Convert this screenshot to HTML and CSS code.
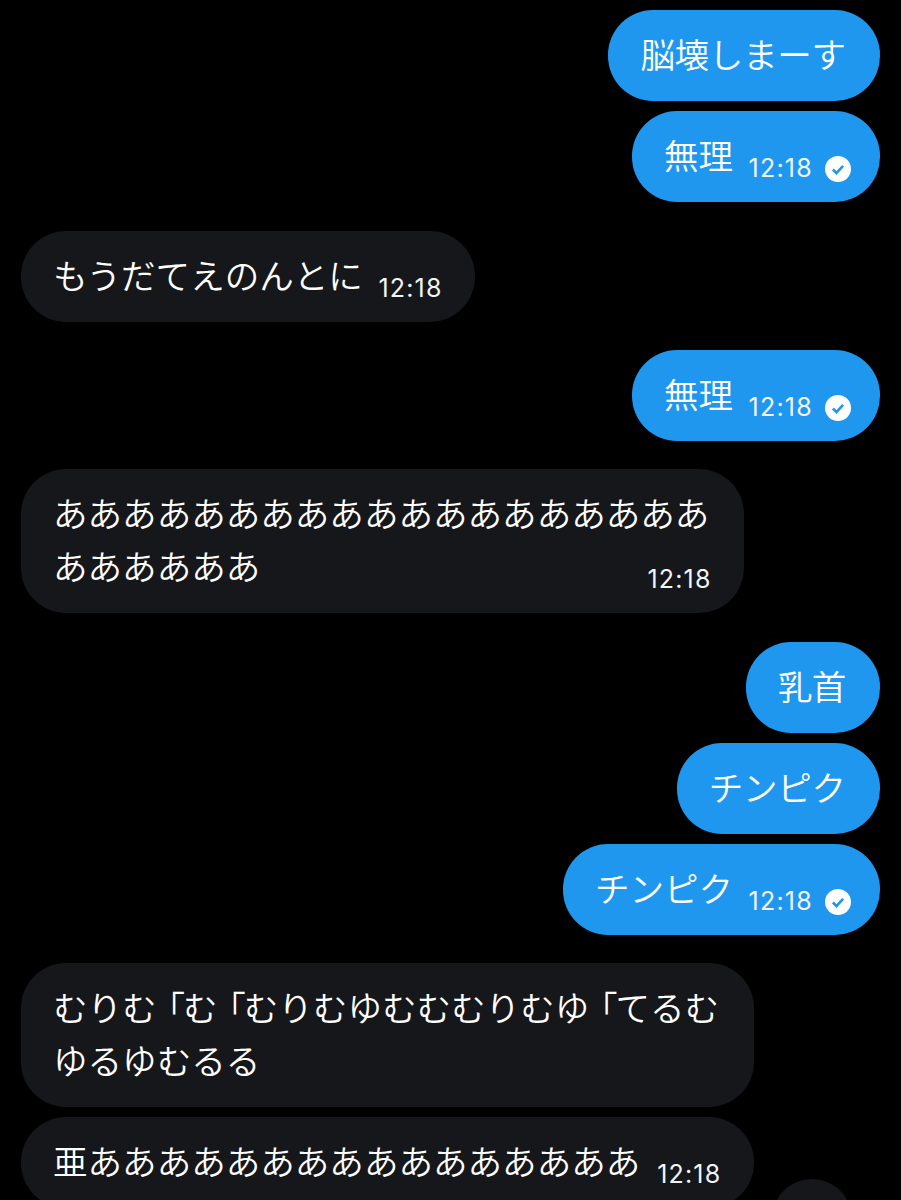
FILE: index.html
```html
<!DOCTYPE html>
<html lang="ja">

<head>
    <meta charset="UTF-8">
    <meta name="viewport" content="width=device-width, initial-scale=1.0">
    <title>Messages</title>
    <link rel="stylesheet" href="styles.css">
</head>

<body>
    <div class="chat">
        <div class="group sent">
            <div class="bubble tight">脳壊しまーす</div>
            <div class="bubble">
                <span>無理</span>
                <span class="meta">
                    <span class="time">12:18</span>
                    <svg class="tick" viewBox="0 0 25 25"><circle cx="12.5" cy="12.5" r="12.5" fill="#fff"/><path d="M7.6 13l3.4 3.4 6.4-7" fill="none" stroke="#2097ee" stroke-width="2.5"/></svg>
                </span>
            </div>
        </div>

        <div class="group received wide-gap">
            <div class="bubble">
                <span>もうだてえのんとに</span>
                <span class="meta"><span class="time">12:18</span></span>
            </div>
        </div>

        <div class="group sent">
            <div class="bubble">
                <span>無理</span>
                <span class="meta">
                    <span class="time">12:18</span>
                    <svg class="tick" viewBox="0 0 25 25"><circle cx="12.5" cy="12.5" r="12.5" fill="#fff"/><path d="M7.6 13l3.4 3.4 6.4-7" fill="none" stroke="#2097ee" stroke-width="2.5"/></svg>
                </span>
            </div>
        </div>

        <div class="group received">
            <div class="bubble multi">
                <div>あああああああああああああああああああ</div>
                <div class="last-line">
                    <span>ああああああ</span>
                    <span class="meta"><span class="time">12:18</span></span>
                </div>
            </div>
        </div>

        <div class="group sent wide-gap">
            <div class="bubble tighter">乳首</div>
            <div class="bubble tight">チンピク</div>
            <div class="bubble">
                <span>チンピク</span>
                <span class="meta">
                    <span class="time">12:18</span>
                    <svg class="tick" viewBox="0 0 25 25"><circle cx="12.5" cy="12.5" r="12.5" fill="#fff"/><path d="M7.6 13l3.4 3.4 6.4-7" fill="none" stroke="#2097ee" stroke-width="2.5"/></svg>
                </span>
            </div>
        </div>

        <div class="group received">
            <div class="bubble multi">
                <div>むりむ<span class="kakko">｢</span>む<span class="kakko">｢</span>むりむゆむむむりむゆ<span class="kakko">｢</span>てるむ</div>
                <div>ゆるゆむるる</div>
            </div>
            <div class="bubble">
                <span>亜ああああああああああああああああ</span>
                <span class="meta"><span class="time">12:18</span></span>
            </div>
        </div>
    </div>

    <div class="scroll-button"></div>
</body>

</html>
```

FILE: styles.css
```css
html,
body {
    height: 1200px;
}

body {
    margin: 0;
    background: #000;
    color: #fff;
    font-family: "Noto Sans CJK JP", "Noto Sans", sans-serif;
    font-size: 34.56px;
    font-weight: 350;
    line-height: 53px;
    overflow: hidden;
    position: relative;
}

.chat {
    display: flex;
    flex-direction: column;
    padding: 10px 21px 0;
}

.group {
    display: flex;
    flex-direction: column;
    gap: 10px;
    width: fit-content;
    margin-top: 28px;
}

.group:first-child {
    margin-top: 0;
}

.group.wide-gap {
    margin-top: 29px;
}

.sent {
    align-self: flex-end;
    align-items: flex-end;
}

.received {
    align-self: flex-start;
    align-items: stretch;
}

.bubble {
    display: flex;
    padding: 17px 34.4px 21px 32px;
    border-radius: 45px;
    white-space: nowrap;
}

.bubble.multi {
    display: block;
}

.bubble.tight {
    letter-spacing: -0.35px;
}

.bubble.tighter {
    letter-spacing: -0.75px;
}

.sent .bubble {
    background: #2097ee;
}

.received .bubble {
    background: #16171a;
}

.last-line {
    display: flex;
    justify-content: space-between;
}

.kakko {
    margin: 0 -2px 0 11px;
}

.meta {
    display: flex;
    align-items: center;
    margin-left: auto;
    padding-left: 15.5px;
    position: relative;
    top: 14px;
}

.time {
    font-family: Inter, "Liberation Sans", sans-serif;
    font-size: 25px;
    font-weight: 400;
    letter-spacing: 1.2px;
    width: 62px;
    white-space: nowrap;
    color: #f2f4f6;
}

.tick {
    width: 26px;
    height: 26px;
    margin-left: 14px;
    margin-right: -5px;
}

.scroll-button {
    position: absolute;
    left: 772px;
    top: 1179px;
    width: 80px;
    height: 80px;
    border-radius: 50%;
    background: #16171a;
}
```
